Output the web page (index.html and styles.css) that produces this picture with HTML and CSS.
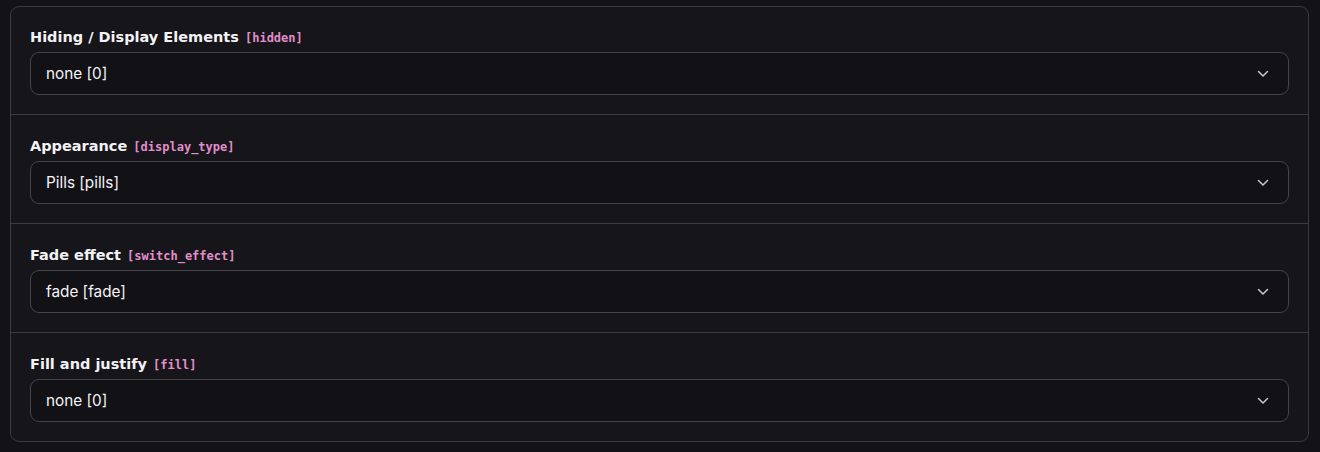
FILE: index.html
```html
<!DOCTYPE html>
<html>
<head>
<meta charset="utf-8">
<link rel="stylesheet" href="styles.css">
</head>
<body>
<div class="card">
  <div class="field">
    <div class="label">Hiding / Display Elements <code class="key">[hidden]</code></div>
    <div class="select"><span>none [0]</span><svg class="chev" width="12" height="8" viewBox="0 0 12 8"><path d="M1.5 1.5 L6 6 L10.5 1.5" fill="none" stroke="#c9c8ce" stroke-width="1.5" stroke-linecap="round" stroke-linejoin="round"/></svg></div>
  </div>
  <div class="field">
    <div class="label">Appearance <code class="key">[display_type]</code></div>
    <div class="select"><span>Pills [pills]</span><svg class="chev" width="12" height="8" viewBox="0 0 12 8"><path d="M1.5 1.5 L6 6 L10.5 1.5" fill="none" stroke="#c9c8ce" stroke-width="1.5" stroke-linecap="round" stroke-linejoin="round"/></svg></div>
  </div>
  <div class="field">
    <div class="label">Fade effect <code class="key">[switch_effect]</code></div>
    <div class="select"><span>fade [fade]</span><svg class="chev" width="12" height="8" viewBox="0 0 12 8"><path d="M1.5 1.5 L6 6 L10.5 1.5" fill="none" stroke="#c9c8ce" stroke-width="1.5" stroke-linecap="round" stroke-linejoin="round"/></svg></div>
  </div>
  <div class="field">
    <div class="label">Fill and justify <code class="key">[fill]</code></div>
    <div class="select"><span>none [0]</span><svg class="chev" width="12" height="8" viewBox="0 0 12 8"><path d="M1.5 1.5 L6 6 L10.5 1.5" fill="none" stroke="#c9c8ce" stroke-width="1.5" stroke-linecap="round" stroke-linejoin="round"/></svg></div>
  </div>
</div>
</body>
</html>
```
FILE: styles.css
```css
html, body {
  margin: 0;
  padding: 0;
  background: #131217;
}
body {
  padding: 6px 11px 10px 10px;
  font-family: Inter, "Noto Sans", sans-serif;
  color: #f2f2f4;
}
.card {
  border: 1px solid #3c3b42;
  border-radius: 9px;
  background: #16151a;
}
.field {
  padding: 21px 19px 19px 19px;
  height: 109px;
  box-sizing: border-box;
  border-top: 1px solid #3c3b42;
}
.field:first-child {
  border-top: none;
  padding-top: 20px;
  height: 107px;
}
.label {
  font-family: "DejaVu Sans", Verdana, sans-serif;
  font-size: 14.5px;
  font-weight: 700;
  line-height: 20px;
  height: 20px;
  margin-bottom: 5px;
  white-space: nowrap;
}
.key {
  font-family: "DejaVu Sans Mono", monospace;
  font-size: 12px;
  font-weight: 700;
  color: #e08fca;
  margin-left: 1px;
}
.select {
  display: flex;
  align-items: center;
  justify-content: space-between;
  height: 43px;
  box-sizing: border-box;
  border: 1px solid #45444b;
  border-radius: 9px;
  background: #121116;
  padding: 0 19px 0 15px;
  font-size: 15.3px;
  color: #f4f4f6;
}
.chev {
  display: block;
}
```
